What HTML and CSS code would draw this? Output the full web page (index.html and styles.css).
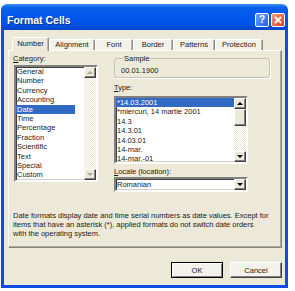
FILE: index.html
```html
<!DOCTYPE html>
<html lang="en">
<head>
    <meta charset="UTF-8">
    <title>Format Cells</title>
    <link rel="stylesheet" href="styles.css">
</head>
<body>
    <div class="window">
        <div class="titlebar">
            <span class="title">Format Cells</span>
            <div class="title-buttons">
                <span class="tb-btn help">?</span>
                <span class="tb-btn close">
                    <svg width="8" height="8" viewBox="0 0 8 8"><path d="M1 1L7 7M7 1L1 7" stroke="#fff" stroke-width="1.8"/></svg>
                </span>
            </div>
        </div>
        <div class="client">
            <div class="tabs">
                <span class="tab active tab-number">Number</span>
                <span class="tab tab-alignment">Alignment</span>
                <span class="tab tab-font">Font</span>
                <span class="tab tab-border">Border</span>
                <span class="tab tab-patterns">Patterns</span>
                <span class="tab tab-protection">Protection</span>
            </div>
            <div class="panel">
                <div class="columns">
                    <div class="col-left">
                        <div class="label"><u>C</u>ategory:</div>
                        <div class="listbox category-list">
                            <ul class="items">
                                <li>General</li>
                                <li>Number</li>
                                <li>Currency</li>
                                <li>Accounting</li>
                                <li class="selected">Date</li>
                                <li>Time</li>
                                <li>Percentage</li>
                                <li>Fraction</li>
                                <li>Scientific</li>
                                <li>Text</li>
                                <li>Special</li>
                                <li>Custom</li>
                            </ul>
                            <div class="scrollbar disabled">
                                <span class="sb-btn up"></span>
                                <span class="sb-track"></span>
                                <span class="sb-btn down"></span>
                            </div>
                        </div>
                    </div>
                    <div class="col-right">
                        <fieldset class="sample">
                            <legend>Sample</legend>
                            <div class="sample-value">00.01.1900</div>
                        </fieldset>
                        <div class="label label-type"><u>T</u>ype:</div>
                        <div class="listbox type-list">
                            <ul class="items">
                                <li class="selected">*14.03.2001</li>
                                <li>*miercuri, 14 martie 2001</li>
                                <li>14.3</li>
                                <li>14.3.01</li>
                                <li>14.03.01</li>
                                <li>14-mar.</li>
                                <li>14-mar.-01</li>
                            </ul>
                            <div class="scrollbar">
                                <span class="sb-btn up"></span>
                                <span class="sb-thumb"></span>
                                <span class="sb-track"></span>
                                <span class="sb-btn down"></span>
                            </div>
                        </div>
                        <div class="label label-locale"><u>L</u>ocale (location):</div>
                        <div class="combo">
                            <span class="combo-value">Romanian</span>
                            <span class="sb-btn down"></span>
                        </div>
                    </div>
                </div>
                <p class="note">Date formats display date and time serial numbers as date values. Except for<br>items that have an asterisk (*), applied formats do not switch date orders<br>with the operating system.</p>
            </div>
            <div class="buttons">
                <button class="btn default">OK</button>
                <button class="btn">Cancel</button>
            </div>
        </div>
    </div>
</body>
</html>
```

FILE: styles.css
```css
body {
    margin: 0;
    background-color: #fff;
    font-family: "Liberation Sans", Arial, sans-serif;
    font-size: 7.5px;
    color: #1a1a1a;
}
.window {
    width: 287px;
    margin: 4px 0 0 1px;
}
.titlebar {
    height: 26px;
    box-sizing: border-box;
    padding: 5px 3px 0 6px;
    display: flex;
    align-items: center;
    justify-content: space-between;
    background: linear-gradient(#3d8ff6, #0a60ea 14%, #0058ee 45%, #0153e4 80%, #0144c8);
    border-radius: 6px 6px 0 0;
}
.title {
    color: #fff;
    font-weight: bold;
    font-size: 10.5px;
    text-shadow: 1px 1px #0c2e8a;
}
.title-buttons {
    display: flex;
    gap: 2px;
}
.tb-btn {
    width: 14px;
    height: 14px;
    box-sizing: border-box;
    border: 1px solid #fff;
    border-radius: 2px;
    display: flex;
    align-items: center;
    justify-content: center;
    color: #fff;
    font-weight: bold;
    font-size: 10px;
}
.help {
    background: linear-gradient(135deg, #6a9ff7, #2461e2);
}
.close {
    background: linear-gradient(135deg, #f09a7a, #d9441d);
}
.client {
    background-color: #ece9d8;
    border: 3px solid #0a4fe2;
    border-top: 0;
    padding: 7px 0 7px;
}
.tabs {
    display: flex;
    align-items: flex-end;
    height: 13px;
    padding-left: 8px;
}
.tab {
    height: 11px;
    box-sizing: border-box;
    line-height: 10px;
    text-align: center;
    background-color: #f3f2ea;
    border: 1px solid #fff;
    border-right-color: #8a8a84;
    border-bottom: 0;
    border-radius: 2px 2px 0 0;
    box-shadow: inset -1px 0 #bdbaac;
}
.tab.active {
    height: 14px;
    line-height: 12px;
    margin-bottom: -1px;
    background-color: #ece9d8;
    position: relative;
    z-index: 1;
}
.tab-number { width: 37px; }
.tab-alignment { width: 46px; }
.tab-font { width: 38px; }
.tab-border { width: 40px; }
.tab-patterns { width: 42px; }
.tab-protection { width: 48px; }
.panel {
    height: 198px;
    box-sizing: border-box;
    margin: 0 3px 0 4px;
    padding: 3px 0 0 4px;
    border: 1px solid #fff;
    border-right-color: #85857f;
    border-bottom-color: #85857f;
    box-shadow: inset -1px -1px #aca899;
}
.columns {
    display: flex;
}
.col-left {
    width: 85px;
}
.col-right {
    width: 156px;
    margin-left: 16px;
}
.label {
    line-height: 9px;
    white-space: nowrap;
}
.listbox {
    display: flex;
    box-sizing: border-box;
    background-color: #fff;
    border: 2px solid;
    border-color: #808080 #fff #fff #808080;
    box-shadow: inset 1px 1px #404040, inset -1px -1px #d4d0c8;
    overflow: hidden;
}
.category-list {
    margin: 2px 0 0 1px;
    height: 117px;
}
.category-list .items {
    margin-right: 9px;
}
.type-list {
    margin-top: 4px;
    width: 134px;
    height: 68px;
}
.items {
    flex: 1;
    list-style: none;
    margin: 0;
    padding: 0;
    min-width: 0;
}
.items li {
    line-height: 9.4px;
    padding-left: 1px;
    white-space: nowrap;
    overflow: hidden;
}
.items li.selected {
    background-color: #316ac5;
    color: #fff;
}
.scrollbar {
    width: 12px;
    display: flex;
    flex-direction: column;
}
.sb-btn,
.sb-thumb {
    box-sizing: border-box;
    background-color: #ece9d8;
    border: 1px solid;
    border-color: #fff #404040 #404040 #fff;
    box-shadow: inset -1px -1px #808080;
}
.sb-btn {
    height: 11px;
    display: flex;
    align-items: center;
    justify-content: center;
}
.sb-btn::before {
    content: "";
    width: 0;
    height: 0;
    border-left: 3px solid transparent;
    border-right: 3px solid transparent;
}
.sb-btn.up::before {
    border-bottom: 3px solid #000;
}
.sb-btn.down::before {
    border-top: 3px solid #000;
}
.disabled .sb-btn.up::before {
    border-bottom-color: #aca899;
}
.disabled .sb-btn.down::before {
    border-top-color: #aca899;
}
.sb-thumb {
    height: 17px;
}
.sb-track {
    flex: 1;
    background: repeating-conic-gradient(#fff 0 25%, #ece9d8 0 50%) 0 0 / 2px 2px;
}
.sample {
    box-sizing: border-box;
    margin: 0;
    padding: 2.5px 0 2.5px 6px;
    border: 1px solid #c4c2b4;
    border-radius: 3px;
    box-shadow: 1px 1px #fff;
}
.sample legend {
    line-height: 9px;
    padding: 0 1px;
    margin-left: 2px;
    color: #222;
}
.sample-value {
    line-height: 9px;
}
.label-type {
    margin-top: 5px;
}
.label-locale {
    margin-top: 3px;
}
.combo {
    margin-top: 1px;
    width: 134px;
    height: 15px;
    box-sizing: border-box;
    display: flex;
    align-items: center;
    background-color: #fff;
    border: 2px solid;
    border-color: #808080 #fff #fff #808080;
    box-shadow: inset 1px 1px #404040, inset -1px -1px #d4d0c8;
}
.combo-value {
    flex: 1;
    padding-left: 1px;
}
.combo .sb-btn {
    width: 12px;
}
.note {
    margin: 18.5px 0 0;
    line-height: 9.3px;
    white-space: nowrap;
}
.buttons {
    display: flex;
    justify-content: flex-end;
    gap: 7px;
    margin-top: 14px;
    padding-right: 3px;
}
.btn {
    width: 52px;
    height: 16px;
    padding: 0;
    font-family: "Liberation Sans", Arial, sans-serif;
    font-size: 7.5px;
    color: #1a1a1a;
    background-color: #f3f2ec;
    border: 1px solid;
    border-color: #fff #404040 #404040 #fff;
    box-shadow: inset -1px -1px #808080;
}
.btn.default {
    border-color: #000;
    box-shadow: inset 1px 1px #fff, inset -1px -1px #808080;
}
```
